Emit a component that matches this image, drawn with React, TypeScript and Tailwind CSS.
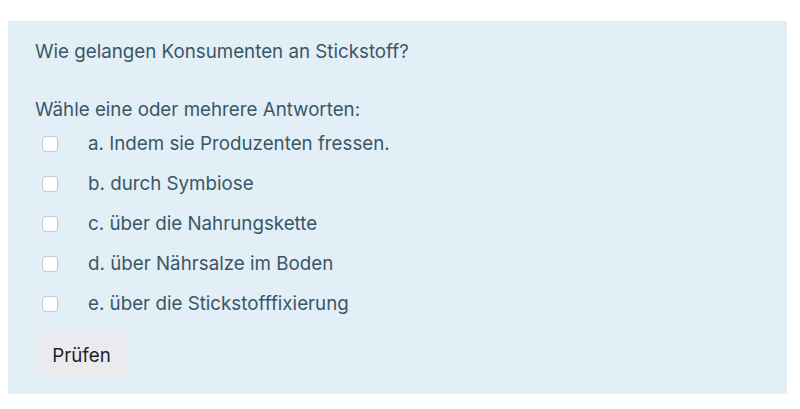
import React from "react";

const options = [
  "a. Indem sie Produzenten fressen.",
  "b. durch Symbiose",
  "c. über die Nahrungskette",
  "d. über Nährsalze im Boden",
  "e. über die Stickstofffixierung",
];

export default function App() {
  return (
    <div
      className="w-[800px] h-[409px] bg-white pt-[21px] pl-[8px]"
      style={{ fontFamily: "Inter, 'Noto Sans', sans-serif" }}
    >
      <div className="w-[779px] h-[373px] bg-[#e3eff7] pl-[27px] pr-[27px] pt-[18px] text-[#3a5767]">
        <p className="text-[18.75px] leading-[26px]">Wie gelangen Konsumenten an Stickstoff?</p>
        <p className="text-[18.75px] leading-[26px] mt-[32px]">Wähle eine oder mehrere Antworten:</p>
        <div className="mt-[1px] flex flex-col">
          {options.map((o) => (
            <label key={o} className="flex items-center h-[40px]">
              <span className="ml-[7px] w-[16px] h-[16px] rounded-[4px] border border-[#c4c8cc] bg-white" />
              <span className="ml-[30px] text-[18.75px] leading-[26px]">{o}</span>
            </label>
          ))}
        </div>
        <button className="mt-[8px] ml-[1px] w-[91px] h-[46px] pt-[3px] bg-[#e9ebee] text-[#1f2327] text-[18.75px] rounded-[2px]">
          Prüfen
        </button>
      </div>
    </div>
  );
}
